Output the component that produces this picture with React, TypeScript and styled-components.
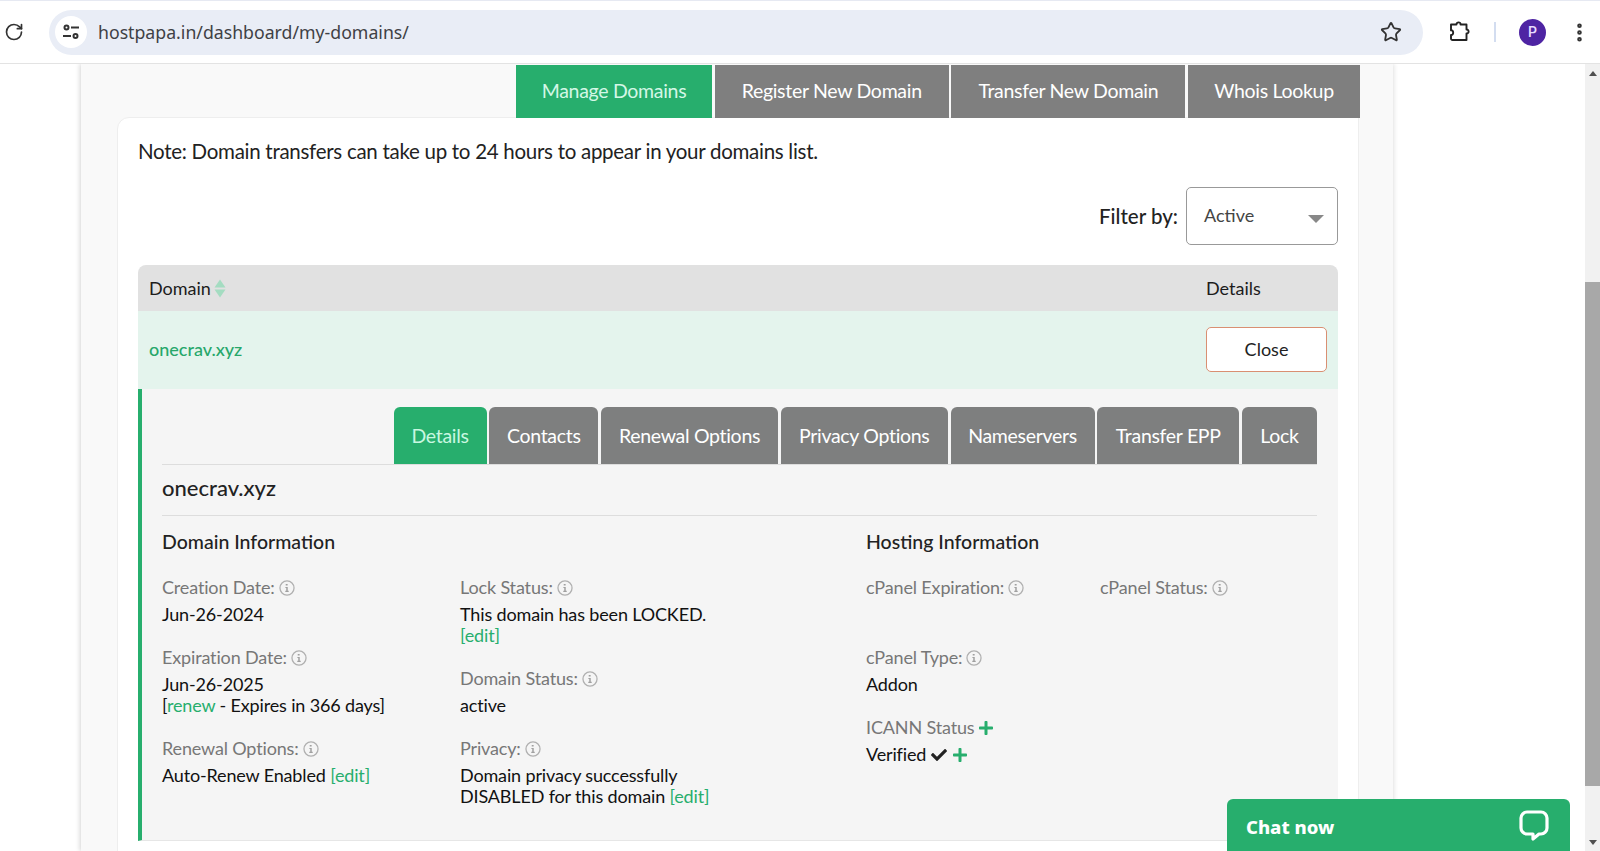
import React from "react";
import styled, { createGlobalStyle } from "styled-components";
import { RotateCw, Star, EllipsisVertical } from "lucide-react";
import { FaCheck, FaPlus } from "react-icons/fa";

const Global = createGlobalStyle`
  html, body { margin: 0; padding: 0; height: 100%; overflow: hidden; background: #fff; }
  body { font-family: Lato, "Open Sans", sans-serif; color: #111; }
  * { box-sizing: border-box; }
`;

const Shell = styled.div`
  height: 851px;
  display: flex;
  flex-direction: column;
  overflow: hidden;
  position: relative;
`;
const Toolbar = styled.header`
  height: 64px;
  flex: none;
  background: #fff;
  border-top: 1px solid #e6e9f2;
  border-bottom: 1px solid #e3e3e3;
  display: flex;
  align-items: center;
  padding: 0 0 0 4px;
`;
const IconSlot = styled.span<{ $w: number; $ml?: number }>`
  width: ${(p) => p.$w}px;
  margin-left: ${(p) => p.$ml ?? 0}px;
  flex: none;
  display: flex;
  align-items: center;
  justify-content: center;
  color: #333;
`;
const Omnibox = styled.div`
  width: 1374px;
  height: 45px;
  flex: none;
  margin-left: 25px;
  border-radius: 23px;
  background: #e9edf6;
  display: flex;
  align-items: center;
  padding: 0 21px 0 6px;
`;
const TuneBadge = styled.span`
  width: 32px;
  height: 32px;
  border-radius: 50%;
  background: #fff;
  display: flex;
  align-items: center;
  justify-content: center;
  flex: none;
`;
const Url = styled.span`
  flex: 1;
  margin-left: 11px;
  font-family: "Noto Sans", Roboto, sans-serif;
  font-size: 17.7px;
  color: #3f4145;
`;
const Divider = styled.span`
  width: 2px;
  height: 20px;
  background: #d3ddf0;
  margin: 0 23px 0 -3px;
  flex: none;
`;
const Avatar = styled.span`
  width: 27px;
  height: 27px;
  border-radius: 50%;
  background: #4e24a3;
  color: #e8dcff;
  font: 500 14px Roboto, sans-serif;
  display: flex;
  align-items: center;
  justify-content: center;
  flex: none;
`;
const Viewport = styled.div`
  flex: 1;
  min-height: 0;
  display: flex;
  overflow: hidden;
`;
const PageArea = styled.main`
  flex: 1;
  min-width: 0;
  padding: 0 192px 0 81px;
  background: #fff;
`;
const Panel = styled.section`
  height: 100%;
  width: 1312px;
  background: #f9f9f9;
  box-shadow: -2px 0 4px rgba(0, 0, 0, 0.12), 2px 0 4px rgba(0, 0, 0, 0.08);
  padding: 1px 34px 0 36px;
`;
const TopTabs = styled.nav`
  display: flex;
  justify-content: flex-end;
  gap: 2.67px;
  height: 53px;
  margin-right: -1px;
  position: relative;
  z-index: 1;
`;
const TopTab = styled.a<{ $active?: boolean; $w: number }>`
  width: ${(p) => p.$w}px;
  display: flex;
  align-items: center;
  justify-content: center;
  padding-bottom: 2px;
  background: ${(p) => (p.$active ? "#27ae6d" : "#7f7f7f")};
  color: ${(p) => (p.$active ? "#d4f7e6" : "#fff")};
  font-size: 19.5px;
  letter-spacing: -0.3px;
`;
const Card = styled.div`
  margin-top: -1px;
  background: #fff;
  border: 1px solid #eee;
  border-radius: 12px 0 0 0;
  padding: 17px 20px 0 20px;
  height: 760px;
`;
const Note = styled.p`
  margin: 0;
  font-size: 20.5px;
  line-height: 33px;
  letter-spacing: -0.28px;
  color: #222;
`;
const FilterRow = styled.div`
  display: flex;
  justify-content: flex-end;
  align-items: center;
  gap: 8px;
  margin-top: 19px;
`;
const FilterLabel = styled.label`
  font-size: 20.5px;
  font-weight: 500;
  color: #222;
`;
const Select = styled.div`
  width: 152px;
  height: 58px;
  border: 1px solid #999;
  border-radius: 5px;
  background: #fff;
  display: flex;
  align-items: center;
  justify-content: space-between;
  padding: 0 13px 3px 17px;
  font-size: 18px;
  color: #444;
`;
const Caret = styled.span`
  width: 0;
  height: 0;
  margin-top: 9px;
  border-left: 8px solid transparent;
  border-right: 8px solid transparent;
  border-top: 8px solid #888;
`;
const TableHead = styled.div`
  margin-top: 20px;
  height: 46px;
  background: #e1e1e1;
  border-radius: 8px 8px 0 0;
  display: flex;
  align-items: center;
  justify-content: space-between;
  padding: 0 11px;
  font-size: 18px;
  color: #1c1c1c;
`;
const HeadName = styled.span`
  display: flex;
  align-items: center;
  gap: 3px;
`;
const HeadDetails = styled.span`
  width: 121px;
`;
const DomainRow = styled.div`
  height: 78px;
  background: #e4f4ed;
  display: flex;
  align-items: center;
  justify-content: space-between;
  padding: 0 11px 2px;
`;
const DomainLink = styled.a`
  color: #27a76b;
  font-size: 18px;
  font-weight: 500;
`;
const CloseButton = styled.button`
  width: 121px;
  height: 45px;
  background: #fff;
  border: 1px solid #d98f72;
  border-radius: 5px;
  font: 18px Lato, sans-serif;
  color: #222;
`;
const DetailPanel = styled.div`
  height: 452px;
  background: #f5f5f5;
  border-left: 4px solid #27ae6d;
  border-bottom: 1px solid #e6e6e6;
  padding: 18px 21px 0 20px;
`;
const InnerTabs = styled.div`
  display: flex;
  justify-content: flex-end;
  gap: 2.75px;
  height: 58px;
  border-bottom: 1px solid #ddd;
`;
const InnerTab = styled.a<{ $active?: boolean; $w: number }>`
  width: ${(p) => p.$w}px;
  display: flex;
  align-items: center;
  justify-content: center;
  border-radius: 6px 6px 0 0;
  background: ${(p) => (p.$active ? "#27ae6d" : "#7e7f7f")};
  color: ${(p) => (p.$active ? "#c8f7e0" : "#fff")};
  font-size: 19.5px;
  letter-spacing: -0.3px;
`;
const DomainTitle = styled.h2`
  margin: 0;
  height: 51px;
  padding-bottom: 5px;
  display: flex;
  align-items: center;
  font-size: 22px;
  font-weight: 500;
  color: #222;
  border-bottom: 1px solid #ddd;
`;
const InfoGrid = styled.div`
  display: grid;
  grid-template-columns: 704px 1fr;
  padding-top: 13px;
`;
const InfoSection = styled.div``;
const SectionTitle = styled.h3`
  margin: 0 0 22px;
  font-size: 19.5px;
  line-height: 26px;
  font-weight: 500;
  color: #222;
`;
const Columns = styled.div<{ $first: number }>`
  display: grid;
  grid-template-columns: ${(p) => p.$first}px 1fr;
`;
const Field = styled.div<{ $h?: number }>`
  font-size: 18px;
  line-height: 21px;
  letter-spacing: -0.15px;
  color: #111;
  margin-bottom: 22px;
  min-height: ${(p) => p.$h ?? 0}px;
`;
const Label = styled.div`
  display: flex;
  align-items: center;
  gap: 4px;
  height: 21px;
  margin-bottom: 6px;
  color: #777;
`;
const Edit = styled.a`
  color: #27ae6d;
`;
const Value = styled.div`
  display: flex;
  align-items: center;
  gap: 5px;
`;
const PlusIcon = styled(FaPlus)`
  width: 16px;
  height: 16px;
  color: #27ae6d;
`;
const CheckIcon = styled(FaCheck)`
  width: 16px;
  height: 16px;
  color: #222;
`;
const Scrollbar = styled.aside`
  width: 15px;
  flex: none;
  background: #f1f1f1;
  display: flex;
  flex-direction: column;
  align-items: center;
`;
const ArrowUp = styled.span`
  margin-top: 7px;
  border-left: 4px solid transparent;
  border-right: 4px solid transparent;
  border-bottom: 5px solid #505050;
`;
const Thumb = styled.div`
  width: 100%;
  height: 504px;
  margin-top: 206px;
  background: #a8a8a8;
`;
const ArrowDown = styled.span`
  margin-top: auto;
  margin-bottom: 6px;
  border-left: 4px solid transparent;
  border-right: 4px solid transparent;
  border-top: 5px solid #505050;
`;
const Chat = styled.div`
  position: absolute;
  left: 1227px;
  bottom: 0;
  width: 343px;
  height: 52px;
  background: #27ae6d;
  border-radius: 6px 6px 0 0;
  color: #fff;
  display: flex;
  align-items: center;
  justify-content: space-between;
  padding: 2px 21px 0 19px;
  font: 800 18.5px "Noto Sans", sans-serif;
`;

const Tune = () => (
  <svg width="18" height="18" viewBox="0 0 18 18" fill="none" stroke="#333" strokeWidth="2">
    <circle cx="4.5" cy="4.5" r="2" />
    <path d="M9 4.5h8M1 13h8" />
    <circle cx="13.5" cy="13" r="2" />
  </svg>
);
const Puzzle = () => (
  <svg width="22" height="22" viewBox="0 0 22 22" fill="none" stroke="#222" strokeWidth="1.9" strokeLinejoin="round">
    <path d="M2 3.5h5.5c-.3-2.8 4.5-2.8 4 0H17.5v5c2.8-.4 2.8 4.4 0 4v6.5H3.5c-.8 0-1.5-.7-1.5-1.5V14c2.9.3 2.9-5 0-4.7z" />
  </svg>
);
const Sort = () => (
  <svg width="12" height="21" viewBox="0 0 12 21" fill="#a4dcc1">
    <path d="M6 1.5 11.5 9.5H.5zM.5 11.5h11L6 19.5z" />
  </svg>
);
const Bubble = () => (
  <svg width="30" height="34" viewBox="0 0 30 34" fill="none" stroke="#fff" strokeWidth="3.2" strokeLinejoin="round">
    <path d="M8 3h14a6 6 0 0 1 6 6v10a6 6 0 0 1-6 6h-2l-6 5v-5H8a6 6 0 0 1-6-6V9a6 6 0 0 1 6-6z" />
  </svg>
);
const InfoGlyph = () => (
  <svg width="16" height="16" viewBox="0 0 15 15" fill="none">
    <circle cx="7.5" cy="7.5" r="6.6" stroke="#b0b0b0" strokeWidth="1.2" />
    <path d="M6.3 3.7h1.8v1.5H6.3zM6 6.5h2.2v3.6h.9v1.1H5.9v-1.1h.9V7.6H6z" fill="#a0a0a0" />
  </svg>
);

const topTabs = [
  { t: "Manage Domains", w: 196, active: true },
  { t: "Register New Domain", w: 234 },
  { t: "Transfer New Domain", w: 234 },
  { t: "Whois Lookup", w: 172 },
];
const innerTabs = [
  { t: "Details", w: 93, active: true },
  { t: "Contacts", w: 109 },
  { t: "Renewal Options", w: 177 },
  { t: "Privacy Options", w: 167 },
  { t: "Nameservers", w: 144 },
  { t: "Transfer EPP", w: 142 },
  { t: "Lock", w: 75 },
];

const Tip = ({ children }: { children: React.ReactNode }) => (
  <Label>
    {children}
    <InfoGlyph />
  </Label>
);

export default function App() {
  return (
    <Shell>
      <Global />
      <Toolbar>
        <IconSlot $w={20}><RotateCw size={20} strokeWidth={2} /></IconSlot>
        <Omnibox>
          <TuneBadge><Tune /></TuneBadge>
          <Url>hostpapa.in/dashboard/my-domains/</Url>
          <Star size={22} strokeWidth={2} color="#333" />
        </Omnibox>
        <IconSlot $w={74}><Puzzle /></IconSlot>
        <Divider />
        <Avatar>P</Avatar>
        <IconSlot $w={42} $ml={12}><EllipsisVertical size={23} strokeWidth={2.8} /></IconSlot>
      </Toolbar>
      <Viewport>
        <PageArea>
          <Panel>
            <TopTabs>
              {topTabs.map((t) => (
                <TopTab key={t.t} $w={t.w} $active={t.active}>{t.t}</TopTab>
              ))}
            </TopTabs>
            <Card>
              <Note>Note: Domain transfers can take up to 24 hours to appear in your domains list.</Note>
              <FilterRow>
                <FilterLabel>Filter by:</FilterLabel>
                <Select>Active<Caret /></Select>
              </FilterRow>
              <TableHead>
                <HeadName>Domain <Sort /></HeadName>
                <HeadDetails>Details</HeadDetails>
              </TableHead>
              <DomainRow>
                <DomainLink>onecrav.xyz</DomainLink>
                <CloseButton>Close</CloseButton>
              </DomainRow>
              <DetailPanel>
                <InnerTabs>
                  {innerTabs.map((t) => (
                    <InnerTab key={t.t} $w={t.w} $active={t.active}>{t.t}</InnerTab>
                  ))}
                </InnerTabs>
                <DomainTitle>onecrav.xyz</DomainTitle>
                <InfoGrid>
                  <InfoSection>
                    <SectionTitle>Domain Information</SectionTitle>
                    <Columns $first={298}>
                      <div>
                        <Field>
                          <Tip>Creation Date:</Tip>
                          Jun-26-2024
                        </Field>
                        <Field>
                          <Tip>Expiration Date:</Tip>
                          Jun-26-2025
                          <div>[<Edit>renew</Edit> - Expires in 366 days]</div>
                        </Field>
                        <Field>
                          <Tip>Renewal Options:</Tip>
                          Auto-Renew Enabled <Edit>[edit]</Edit>
                        </Field>
                      </div>
                      <div>
                        <Field>
                          <Tip>Lock Status:</Tip>
                          This domain has been LOCKED.
                          <div><Edit>[edit]</Edit></div>
                        </Field>
                        <Field>
                          <Tip>Domain Status:</Tip>
                          active
                        </Field>
                        <Field>
                          <Tip>Privacy:</Tip>
                          Domain privacy successfully
                          <div>DISABLED for this domain <Edit>[edit]</Edit></div>
                        </Field>
                      </div>
                    </Columns>
                  </InfoSection>
                  <InfoSection>
                    <SectionTitle>Hosting Information</SectionTitle>
                    <Columns $first={234}>
                      <div>
                        <Field $h={48}>
                          <Tip>cPanel Expiration:</Tip>
                        </Field>
                        <Field>
                          <Tip>cPanel Type:</Tip>
                          Addon
                        </Field>
                        <Field>
                          <Label>ICANN Status<PlusIcon /></Label>
                          <Value>Verified <CheckIcon /><PlusIcon /></Value>
                        </Field>
                      </div>
                      <div>
                        <Field>
                          <Tip>cPanel Status:</Tip>
                        </Field>
                      </div>
                    </Columns>
                  </InfoSection>
                </InfoGrid>
              </DetailPanel>
            </Card>
          </Panel>
        </PageArea>
        <Scrollbar>
          <ArrowUp />
          <Thumb />
          <ArrowDown />
        </Scrollbar>
      </Viewport>
      <Chat>
        Chat now
        <Bubble />
      </Chat>
    </Shell>
  );
}
